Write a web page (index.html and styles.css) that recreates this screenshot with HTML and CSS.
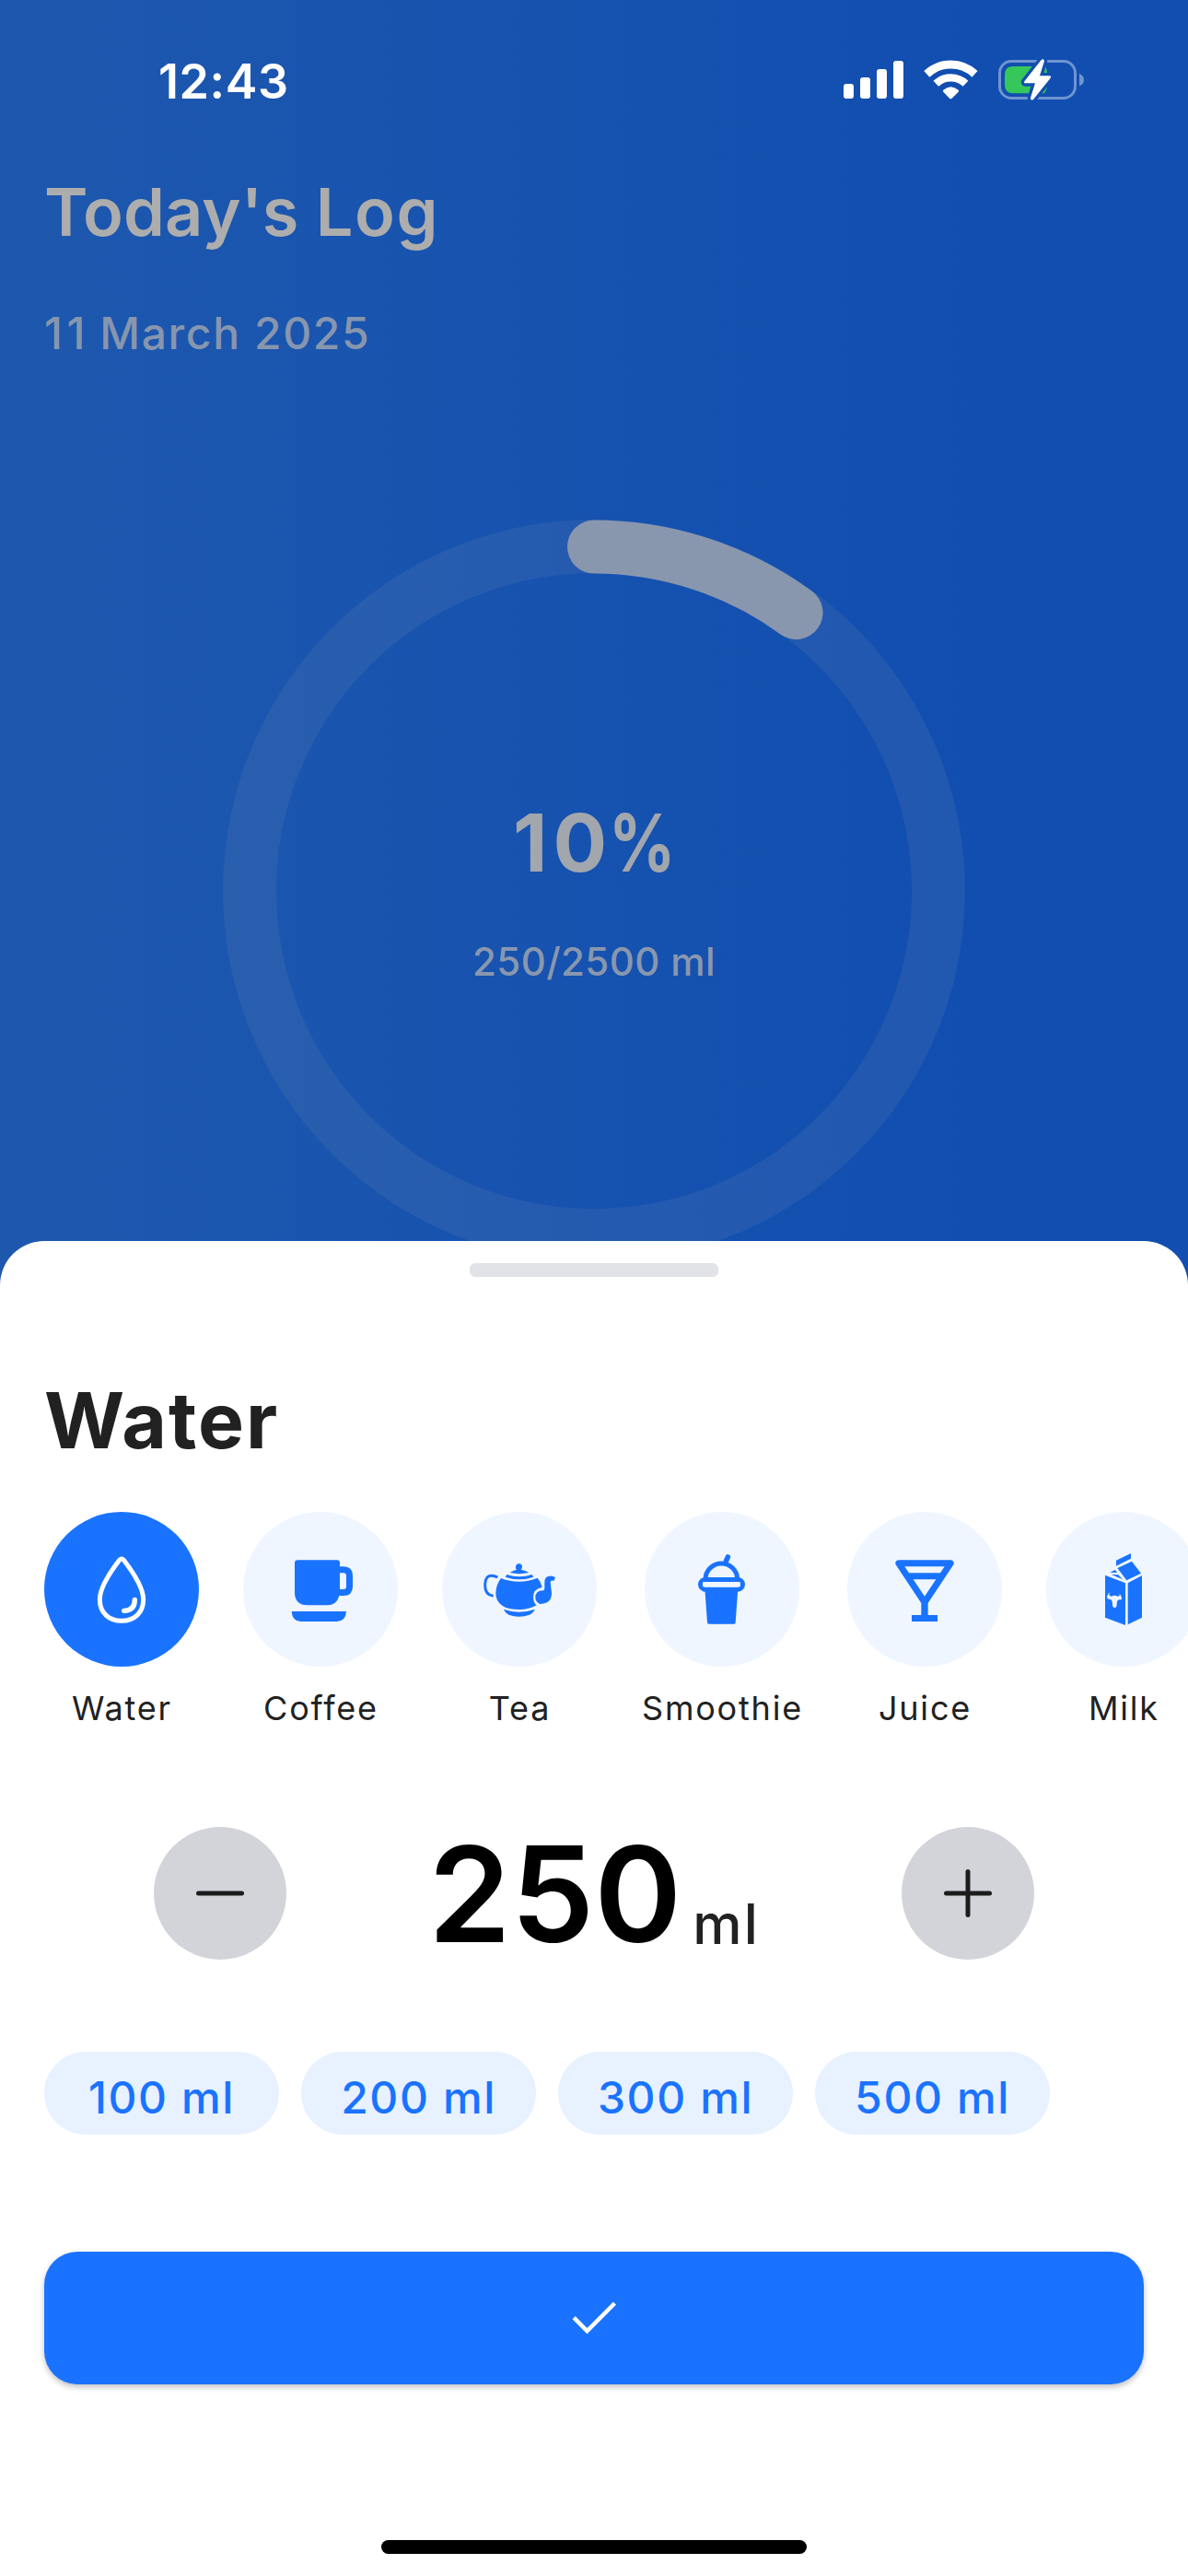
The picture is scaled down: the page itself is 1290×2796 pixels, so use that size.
FILE: index.html
```html
<!DOCTYPE html>
<html lang="en">
<head>
<meta charset="utf-8">
<title>Today's Log</title>
<link rel="stylesheet" href="styles.css">
</head>
<body>
<div class="app">
  <section class="hero">
    <header class="status">
      <span class="time">12:43</span>
      <svg class="status-icons" viewBox="0 0 990 288" aria-hidden="true">
        <g fill="#fff">
          <rect x="108" y="153" width="33" height="48" rx="9"/>
          <rect x="162" y="132" width="33" height="69" rx="9"/>
          <rect x="216" y="105" width="33" height="96" rx="9"/>
          <rect x="270" y="78" width="33" height="123" rx="9"/>
        </g>
        <g fill="none" stroke="#fff">
          <path d="M379 121 A115 115 0 0 1 535.500 121" stroke-width="27"/>
          <path d="M409 152.500 A70 70 0 0 1 505.500 152.500" stroke-width="25"/>
        </g>
        <path d="M433 173 Q457 152 482 173 Q485 176 482 179 L461 200 Q457 204 453 200 L433 179 Q430 176 433 173Z" fill="#fff"/>
        <rect x="616.500" y="79.500" width="246" height="120" rx="38" fill="none" stroke="#7094d0" stroke-width="9"/>
        <path d="M876 120 Q891 126 891 140 Q891 154 876 160Z" fill="#7094d0"/>
        <path d="M660 96 H765 Q770 104 771 116 L773 150 Q772 170 762 184 H660 Q633 184 633 157 V123 Q633 96 660 96Z" fill="#35c759"/>
        <path d="M752 75 L697 145 Q694 151 700 151 H732 L717 199 Q717 209 726 204 L782 134 Q785 127 779 127 H747 L762 79 Q760 69 752 75Z" fill="#fff" stroke="#134fae" stroke-width="20" stroke-linejoin="round" paint-order="stroke"/>
      </svg>
    </header>
    <h1 class="page-title">Today's <span class="loose">Log</span></h1>
    <p class="date"><span class="lead-digit">1</span>1 March 2025</p>
    <div class="progress">
      <svg class="ring" viewBox="0 0 806 806" aria-hidden="true">
        <circle class="ring-track" cx="403" cy="403" r="374"/>
        <path class="ring-value" d="M403 29.500 A374 374 0 0 1 622.500 101"/>
      </svg>
      <div class="progress-text">
        <span class="percent"><span class="tens">1</span><span class="ones">0</span><span class="sign">%</span></span>
        <span class="intake">250/2500 ml</span>
      </div>
    </div>
  </section>

  <main class="sheet">
    <div class="handle"></div>
    <h2 class="drink-title">Water</h2>
    <div class="drinks">
      <div class="drink">
        <div class="bubble selected">
          <svg viewBox="0 0 504 504" fill="none" stroke="#fff" stroke-width="15" stroke-linecap="round" stroke-linejoin="round">
            <path d="M245 157 Q252 149 259 157 C282 187 323 243 323 285 C323 329 293 355 252 355 C211 355 181 329 181 285 C181 243 222 187 245 157Z"/>
            <path d="M295 286 Q295 322 260 322" stroke-width="16"/>
          </svg>
        </div>
        <span class="label">Water</span>
      </div>
      <div class="drink">
        <div class="bubble">
          <svg viewBox="0 0 504 504" fill="#1a73ff">
            <path d="M178 157 H306 Q315 157 315 166 V178 H327 Q357 178 357 208 V243 Q357 273 327 273 H313 Q305 304 273 304 H210 Q168 304 168 262 V167 Q168 157 178 157Z"/>
            <path d="M158 324 H336 Q334 357 305 357 H188 Q160 357 158 324Z"/>
            <path d="M315 199 H327 Q336 199 336 208 V243 Q336 252 327 252 H315Z" fill="#eff6ff"/>
          </svg>
        </div>
        <span class="label">Coffee</span>
      </div>
      <div class="drink">
        <div class="bubble">
          <svg viewBox="60 63 504 504" fill="#1a73ff">
            <path d="M303 251 Q298 245 300 239 Q303 231 311 231 Q319 231 321 239 Q322 246 317 251 Q333 253 343 261 Q311 268 281 261 Q291 253 303 251Z"/>
            <path d="M271 267 Q311 281 353 267 L358 275 Q311 291 266 275Z"/>
            <path d="M252 279 Q311 302 371 278 Q382 290 386 308 Q357 314 357 341 Q357 357 368 367 Q345 381 311 381 Q275 381 256 368 Q234 352 235 326 Q236 299 252 279Z"/>
            <path d="M261 380 Q311 398 362 380 Q359 391 345 398 Q328 404 311 404 Q294 404 277 398 Q265 392 261 380Z"/>
            <path d="M364 342 Q364 319 389 319 Q394 319 394 308 V293 Q394 272 410 272 Q421 270 430 278 Q424 281 425 288 Q418 284 413 290 Q414 305 417 325 Q418 362 383 362 Q379 364 375 361 Q364 354 364 342Z"/>
            <path d="M241 276 C222 266 200 267 200 302 C200 323 208 334 227 337" fill="none" stroke="#1a73ff" stroke-width="9"/>
          </svg>
        </div>
        <span class="label">Tea</span>
      </div>
      <div class="drink">
        <div class="bubble">
          <svg viewBox="720 63 504 504" fill="none" stroke="#1a73ff">
            <path d="M918 283 A52 52 0 0 1 1022 283" stroke-width="15"/>
            <rect x="901.500" y="283.500" width="138" height="32" rx="16" stroke-width="15"/>
            <path d="M985 224 L991 210" stroke-width="17" stroke-linecap="round"/>
            <path d="M916 313 H1024 L1016 424 Q1016 428 1011 428 H929 Q924 428 924 424Z" fill="#1a73ff" stroke="none"/>
            <rect x="909" y="291" width="122" height="16" rx="3" fill="#eff6ff" stroke="none"/>
          </svg>
        </div>
        <span class="label">Smoothie</span>
      </div>
      <div class="drink">
        <div class="bubble">
          <svg viewBox="120 63 504 504" fill="#1a73ff">
            <path fill-rule="evenodd" d="M288 220 H457 Q464 220 467 227 Q468 232 466 235 L383 360 V399 H414 V420 H330 V399 H361 V360 L278 235 Q276 231 277 227 Q280 220 288 220Z M307 241 L321 262 H423 L437 241Z M335 283 L372 338 L409 283Z"/>
          </svg>
        </div>
        <span class="label">Juice</span>
      </div>
      <div class="drink">
        <div class="bubble">
          <svg viewBox="768 63 504 504" fill="#1a73ff">
            <path d="M996 221 L1044 198 V215 L996 239Z"/>
            <path d="M1000 246 L1047 224 L1077 263 L1030 286Z"/>
            <path d="M960 269 L1026 295 V432 L960 407Z"/>
            <path d="M1034 295 L1080 270 V407 L1034 430Z"/>
            <path d="M975 260 L993 252 L999 261Z M980 267 L1003 268 L1017 283Z"/>
            <path fill="#eff6ff" d="M977 324 Q970 332 975 336 L981 338 Q991 333 1000 338 L1006 337 Q1010 334 1005 329 Q1014 334 1014 348 Q1009 350 1003 349 Q998 353 998 362 Q999 374 991 375 Q983 374 984 362 Q984 353 979 348 Q971 349 966 343 Q966 331 977 324Z"/>
          </svg>
        </div>
        <span class="label">Milk</span>
      </div>
    </div>

    <div class="stepper">
      <button class="step" aria-label="Less">
        <svg viewBox="0 0 144 144"><path d="M48.500 72 H95.500"/></svg>
      </button>
      <div class="amount"><span class="value">250</span><span class="unit">ml</span></div>
      <button class="step" aria-label="More">
        <svg viewBox="0 0 144 144"><path d="M48.500 72 H95.500 M72 48.500 V95.500"/></svg>
      </button>
    </div>

    <div class="presets">
      <button class="chip">100 ml</button>
      <button class="chip">200 ml</button>
      <button class="chip">300 ml</button>
      <button class="chip">500 ml</button>
    </div>

    <button class="confirm" aria-label="Confirm">
      <svg viewBox="0 0 60 60"><path d="M8.200 29.700 L22.500 44 L52.500 14"/></svg>
    </button>
    <div class="home-indicator"></div>
  </main>
</div>
</body>
</html>
```
FILE: styles.css
```css
* {
  box-sizing: border-box;
}

body {
  margin: 0;
  font-family: Inter, "Liberation Sans", sans-serif;
  font-weight: 400;
}

h1, h2, p {
  margin: 0;
}

button {
  padding: 0;
  border: 0;
  font: inherit;
}

svg {
  display: block;
}

.app {
  display: flex;
  flex-direction: column;
  width: 1290px;
  height: 2796px;
  overflow: hidden;
  background: linear-gradient(90deg, #1e58ae, #114eb0 82%);
}

.hero {
  height: 1347px;
  flex: none;
  overflow: hidden;
}

.status {
  display: flex;
  align-items: center;
  justify-content: space-between;
  height: 176px;
  padding: 0 80px 0 172px;
}

.time {
  color: #fff;
  font-size: 52px;
  font-weight: 600;
  letter-spacing: 0.6px;
}

.status-icons {
  width: 330px;
  height: 96px;
}

.page-title {
  margin: 10px 48px 0;
  color: #adadad;
  font-size: 72px;
  font-weight: 600;
  line-height: 88px;
  letter-spacing: 0.1px;
}

.loose {
  letter-spacing: 1.6px;
}

.date {
  margin: 59px 48px 0;
  color: #8796ae;
  font-size: 48px;
  font-weight: 500;
  line-height: 58px;
  letter-spacing: 1.6px;
}

.lead-digit {
  letter-spacing: 4.5px;
}

.progress {
  display: grid;
  width: 806px;
  height: 806px;
  margin: 173px auto 0;
}

.progress > * {
  grid-area: 1 / 1;
}

.ring {
  width: 806px;
  height: 806px;
  fill: none;
  stroke-width: 58px;
}

.ring-track {
  stroke: rgba(173, 173, 173, 0.1);
}

.ring-value {
  stroke: #8997ae;
  stroke-linecap: round;
}

.progress-text {
  display: flex;
  flex-direction: column;
  align-items: center;
  justify-content: center;
  gap: 51px;
  padding-bottom: 4px;
}

.percent {
  display: flex;
  color: #a2a6ad;
  font-size: 87px;
  font-weight: 700;
  line-height: 106px;
}

.tens {
  margin-right: 6px;
}

.ones {
  margin-right: 2px;
}

.sign {
  width: 72px;
  transform: scaleX(0.82);
  transform-origin: left;
}

.intake {
  color: #8997ae;
  font-size: 42px;
  font-weight: 500;
  line-height: 50px;
  letter-spacing: 0.4px;
}

.sheet {
  flex: 1;
  padding: 24px 48px 0;
  border-radius: 48px 48px 0 0;
  background: #fff;
}

.handle {
  width: 270px;
  height: 15px;
  margin: 0 auto;
  border-radius: 6px;
  background: #e2e3e7;
}

.drink-title {
  margin-top: 105px;
  color: #212121;
  font-size: 84px;
  font-weight: 700;
  line-height: 102px;
  letter-spacing: 2px;
}

.drinks {
  display: flex;
  gap: 48px;
  margin: 48px -48px 0 0;
  overflow: hidden;
}

.drink {
  display: flex;
  flex: none;
  flex-direction: column;
  align-items: center;
  gap: 23px;
}

.bubble {
  width: 168px;
  height: 168px;
  border-radius: 50%;
  background: #eff6ff;
}

.bubble.selected {
  background: #1a73ff;
}

.label {
  padding-left: 1px;
  color: #212121;
  font-size: 36px;
  line-height: 44px;
  letter-spacing: 1.8px;
}

.stepper {
  display: flex;
  align-items: center;
  justify-content: space-between;
  margin-top: 107px;
  padding: 0 119px;
}

.step {
  width: 144px;
  height: 144px;
  border-radius: 50%;
  background: #d3d4da;
}

.step path {
  fill: none;
  stroke: #1c1c1c;
  stroke-width: 5px;
  stroke-linecap: round;
}

.amount {
  display: flex;
  align-items: baseline;
  gap: 12px;
  height: 144px;
  padding-top: 1px;
  line-height: 144px;
}

.value {
  color: #000;
  font-size: 144px;
  font-weight: 600;
}

.unit {
  position: relative;
  top: 2px;
  color: #212121;
  font-size: 60px;
  font-weight: 500;
  letter-spacing: 2.2px;
}

.presets {
  display: flex;
  gap: 24px;
  margin-top: 100px;
}

.chip {
  width: 255px;
  height: 90px;
  padding-top: 8px;
  border-radius: 45px;
  background: #e7f1ff;
  color: #1a73ff;
  font-size: 48px;
  font-weight: 500;
  letter-spacing: 1.6px;
}

.confirm {
  display: grid;
  place-items: center;
  width: 100%;
  height: 144px;
  margin-top: 127px;
  border-radius: 36px;
  background: #1a73ff;
  box-shadow: 0 3px 6px rgba(0, 0, 0, 0.25);
}

.confirm svg {
  width: 60px;
  height: 60px;
  fill: none;
  stroke: #fff;
  stroke-width: 4.500px;
}

.home-indicator {
  width: 462px;
  height: 15px;
  margin: 169px auto 0;
  border-radius: 8px;
  background: #000;
}
```
